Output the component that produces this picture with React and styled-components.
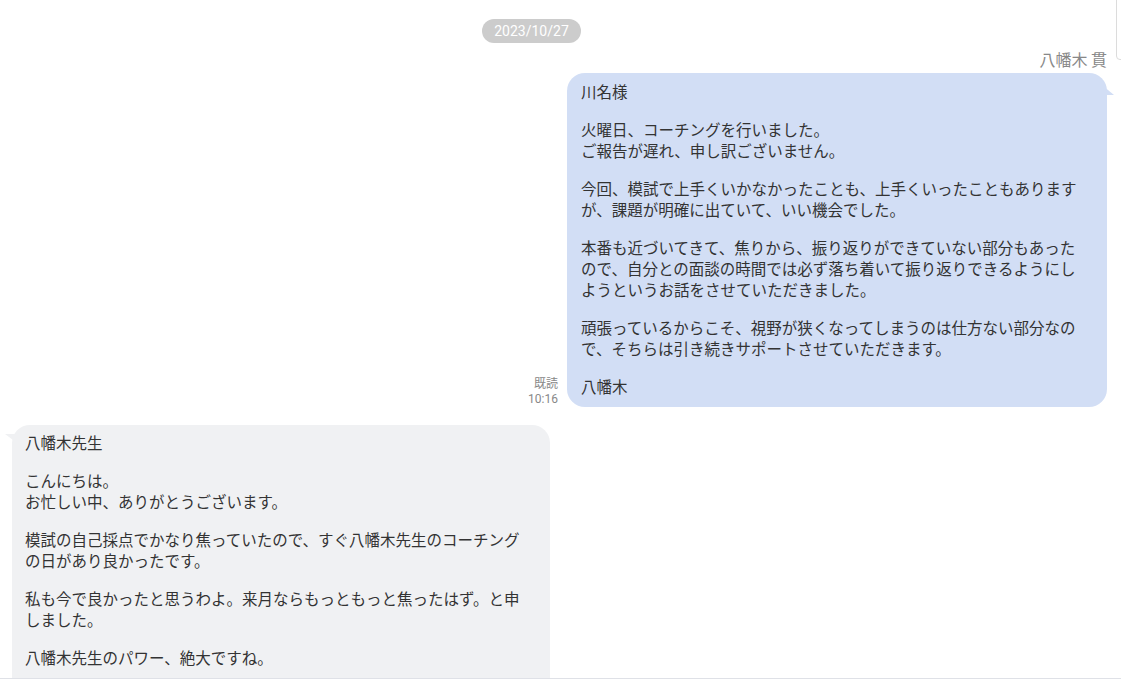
import styled, { createGlobalStyle } from "styled-components";

const GlobalStyle = createGlobalStyle`
  html, body {
    margin: 0;
    padding: 0;
    background: #ffffff;
    overflow: hidden;
  }
  body {
    font-family: "Noto Sans CJK JP", "Noto Sans", sans-serif;
    color: #333333;
  }
`;

const myMessage = [
  ["川名様"],
  ["火曜日、コーチングを行いました。", "ご報告が遅れ、申し訳ございません。"],
  [
    "今回、模試で上手くいかなかったことも、上手くいったこともあります",
    "が、課題が明確に出ていて、いい機会でした。",
  ],
  [
    "本番も近づいてきて、焦りから、振り返りができていない部分もあった",
    "ので、自分との面談の時間では必ず落ち着いて振り返りできるようにし",
    "ようというお話をさせていただきました。",
  ],
  [
    "頑張っているからこそ、視野が狭くなってしまうのは仕方ない部分なの",
    "で、そちらは引き続きサポートさせていただきます。",
  ],
  ["八幡木"],
];

const theirMessage = [
  ["八幡木先生"],
  ["こんにちは。", "お忙しい中、ありがとうございます。"],
  [
    "模試の自己採点でかなり焦っていたので、すぐ八幡木先生のコーチング",
    "の日があり良かったです。",
  ],
  [
    "私も今で良かったと思うわよ。来月ならもっともっと焦ったはず。と申",
    "しました。",
  ],
  ["八幡木先生のパワー、絶大ですね。"],
];

const Paragraphs = ({ paras }) =>
  paras.map((lines, i) => (
    <Para key={i}>
      {lines.map((l, j) => (
        <Line key={j}>{l}</Line>
      ))}
    </Para>
  ));

const App = () => {
  return (
    <>
      <GlobalStyle />
      <Page>
        <SideTab />
        <ChatArea>
          <DateRow>
            <DatePill>2023/10/27</DatePill>
          </DateRow>
          <SenderName>八幡木 貫</SenderName>
          <MessageRow $mine>
            <Meta>
              <span>既読</span>
              <span>10:16</span>
            </Meta>
            <Bubble $mine>
              <Paragraphs paras={myMessage} />
            </Bubble>
          </MessageRow>
          <MessageRow>
            <Bubble>
              <Paragraphs paras={theirMessage} />
            </Bubble>
          </MessageRow>
        </ChatArea>
      </Page>
    </>
  );
};

const Page = styled.div`
  position: relative;
  height: 681px;
  display: flex;
  flex-direction: column;
  overflow: hidden;
`;

const SideTab = styled.div`
  position: absolute;
  top: -10px;
  left: 1116px;
  width: 20px;
  height: 68px;
  border: 1px solid #dcdcdc;
  border-radius: 4px;
  background: #fff;
`;

const ChatArea = styled.div`
  height: 679px;
  flex-shrink: 0;
  overflow: hidden;
  border-bottom: 1px solid #dfe1e7;
  padding: 19px 14px 0 12px;
  box-sizing: border-box;
  display: flex;
  flex-direction: column;
`;

const DateRow = styled.div`
  display: flex;
  justify-content: center;
  padding-right: 56px;
`;

const DatePill = styled.div`
  background: #cccccc;
  color: #ffffff;
  font-family: Roboto, "Liberation Sans", sans-serif;
  font-size: 14px;
  font-weight: 400;
  height: 24px;
  line-height: 24px;
  width: 99px;
  text-align: center;
  border-radius: 12px;
`;

const SenderName = styled.div`
  text-align: right;
  color: #888888;
  font-size: 16px;
  line-height: 21px;
  margin-top: 6px;
  margin-bottom: 3px;
`;

const MessageRow = styled.div`
  display: flex;
  align-items: flex-end;
  justify-content: ${(p) => (p.$mine ? "flex-end" : "flex-start")};
  gap: 9px;
  margin-bottom: 18px;
  flex-shrink: 0;
`;

const Meta = styled.div`
  display: flex;
  flex-direction: column;
  align-items: flex-end;
  color: #888888;
  font-size: 12px;
  line-height: 16px;

  span:last-child {
    font-family: Roboto, "Liberation Sans", sans-serif;
  }
`;

const Bubble = styled.div`
  position: relative;
  width: ${(p) => (p.$mine ? "540px" : "538px")};
  box-sizing: border-box;
  padding: ${(p) => (p.$mine ? "8px 14px 10px" : "7px 13px 40px")};
  background: ${(p) => (p.$mine ? "#d2def5" : "#f0f1f3")};
  border-radius: 18px;
  font-size: 15.5px;
  line-height: 21px;
  color: #333333;

  &::after {
    content: "";
    position: absolute;
    top: ${(p) => (p.$mine ? "12px" : "9px")};
    ${(p) => (p.$mine ? "right: -7px;" : "left: -7px;")}
    width: 0;
    height: 0;
    border-style: solid;
    ${(p) =>
      p.$mine
        ? "border-width: 0 0 10px 12px; border-color: transparent transparent transparent #d2def5; transform: scaleY(-1);"
        : "border-width: 0 12px 9px 0; border-color: transparent #f0f1f3 transparent transparent;"}
  }
`;

const Para = styled.div`
  & + & {
    margin-top: 17px;
  }
`;

const Line = styled.span`
  display: block;
  white-space: nowrap;
`;

export default App;
